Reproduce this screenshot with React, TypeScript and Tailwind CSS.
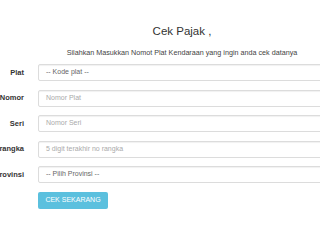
const FIELDS = [
  { label: "Plat", placeholder: "-- Kode plat --", select: true },
  { label: "Nomor", placeholder: "Nomor Plat" },
  { label: "Seri", placeholder: "Nomor Seri" },
  { label: "No rangka", placeholder: "5 digit terakhir no rangka" },
  { label: "Provinsi", placeholder: "-- Pilih Provinsi --", select: true },
];

export default function App() {
  return (
    <div className="h-[240px] w-[320px] overflow-hidden bg-white font-['Liberation_Sans',Arial,sans-serif] text-[#333]">
      <div className="flex flex-col pl-[44px]">
        <h1 className="mt-[24px] text-center text-[11.5px] leading-[14px] text-[#333]">
          Cek Pajak ,
        </h1>
        <p className="mt-[10px] text-center text-[7.2px] leading-[9px] text-[#444]">
          Silahkan Masukkan Nomot Plat Kendaraan yang ingin anda cek datanya
        </p>
      </div>

      <form className="mt-[7px] flex flex-col gap-[8.5px]">
        {FIELDS.map((f) => (
          <div key={f.label} className="flex items-center gap-[14px]">
            <div className="flex w-[24px] shrink-0 justify-end">
              <span className="whitespace-nowrap text-[7.5px] font-bold">{f.label}</span>
            </div>
            <div className="mr-[-8px] flex h-[17px] flex-1 items-center rounded-[2px] border border-[#dcdcdc] bg-white pl-[7px] shadow-[inset_0_1px_1px_rgba(0,0,0,0.06)]">
              <span
                className={
                  f.select
                    ? "whitespace-nowrap text-[7px] text-[#666]"
                    : "whitespace-nowrap text-[7px] text-[#aaa]"
                }
              >
                {f.placeholder}
              </span>
            </div>
          </div>
        ))}
        <div className="pl-[38px]">
          <button
            type="button"
            className="flex h-[17px] w-[70px] items-center justify-center rounded-[2px] bg-[#5bc0de] text-[7px] text-white"
          >
            CEK SEKARANG
          </button>
        </div>
      </form>
    </div>
  );
}
